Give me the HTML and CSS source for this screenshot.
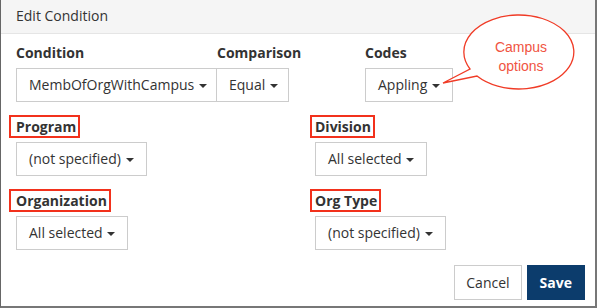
FILE: index.html
```html
<!DOCTYPE html>
<html lang="en">
<head>
    <meta charset="UTF-8">
    <meta name="viewport" content="width=device-width, initial-scale=1.0">
    <title>Edit Condition</title>
    <link rel="stylesheet" href="styles.css">
</head>
<body>
    <div class="dialog">
        <div class="dialog-header">Edit Condition</div>

        <div class="dialog-body">
            <div class="row-top">
                <div class="field field-condition">
                    <label>Condition</label>
                    <button class="dropdown dropdown-joined">MembOfOrgWithCampus <span class="caret"></span></button>
                </div>
                <div class="field field-comparison">
                    <label>Comparison</label>
                    <button class="dropdown dropdown-joined-right">Equal <span class="caret"></span></button>
                </div>
                <div class="field">
                    <label>Codes</label>
                    <button class="dropdown">Appling <span class="caret"></span></button>
                </div>
            </div>

            <div class="row-grid">
                <div class="field">
                    <label><span class="marked">Program</span></label>
                    <button class="dropdown">(not specified) <span class="caret"></span></button>
                </div>
                <div class="field">
                    <label><span class="marked marked-right">Division</span></label>
                    <button class="dropdown">All selected <span class="caret"></span></button>
                </div>
                <div class="field">
                    <label><span class="marked">Organization</span></label>
                    <button class="dropdown">All selected <span class="caret"></span></button>
                </div>
                <div class="field">
                    <label><span class="marked marked-right">Org Type</span></label>
                    <button class="dropdown">(not specified) <span class="caret"></span></button>
                </div>
            </div>
        </div>

        <div class="dialog-footer">
            <button class="btn btn-cancel">Cancel</button>
            <button class="btn btn-save">Save</button>
        </div>

        <!-- annotation bubble over the Codes dropdown -->
        <div class="callout">
            <svg width="140" height="80" viewBox="440 14 140 80">
                <path d="M470 69 A55 37 0 1 1 477 76 L443 83 Z" fill="#fff" stroke="#f03b26" stroke-width="1.3" stroke-linejoin="miter"/>
            </svg>
            <div class="callout-text">Campus<br>options</div>
        </div>
    </div>
</body>
</html>
```

FILE: styles.css
```css
* {
    box-sizing: border-box;
}

body {
    margin: 0;
    font-family: 'Open Sans', 'Noto Sans', sans-serif;
    font-size: 14px;
    line-height: 20px;
    color: #333;
    background-color: #fff;
}

.dialog {
    position: relative;
    width: 597px;
    height: 308px;
    border-left: 1px solid #666;
    border-right: 2px solid #777;
    border-bottom: 2px solid #777;
}

.dialog-header {
    height: 34px;
    padding: 6px 15px 0;
    background-color: #f5f5f5;
    border-bottom: 1px solid #e5e5e5;
}

.dialog-body {
    padding: 9px 15px 0;
}

.row-top {
    display: flex;
}

.field label {
    display: block;
    font-weight: 700;
    margin-bottom: 5px;
}

.field-comparison {
    width: 148px;
}

.dropdown {
    height: 34px;
    padding: 6px 12px;
    font-family: inherit;
    font-size: 14px;
    line-height: 20px;
    color: #333;
    background-color: #fff;
    border: 1px solid #ccc;
    border-radius: 0;
    white-space: nowrap;
}

.dropdown-joined {
    width: 201px;
}

.dropdown-joined-right {
    margin-left: -1px;
    width: 73px;
}

.caret {
    display: inline-block;
    width: 0;
    height: 0;
    margin-left: 1px;
    vertical-align: middle;
    border-top: 4px solid #333;
    border-left: 4px solid transparent;
    border-right: 4px solid transparent;
}

.row-grid {
    display: grid;
    grid-template-columns: 299px 1fr;
    row-gap: 15px;
    margin-top: 15px;
}

.marked {
    border: 2px solid #f2311c;
    padding: 0 2px 0 5px;
    margin-left: -7px;
}

.marked-right {
    padding-left: 3px;
    margin-left: -5px;
}

.dialog-footer {
    display: flex;
    justify-content: flex-end;
    gap: 5px;
    margin-top: 15px;
    padding-right: 10px;
}

.btn {
    height: 35px;
    padding: 6px 11px;
    font-family: inherit;
    font-size: 14px;
    line-height: 20px;
    border: 1px solid #ccc;
    border-radius: 0;
}

.btn-cancel {
    color: #333;
    background-color: #fff;
}

.btn-save {
    padding: 6px 12px;
    font-weight: 700;
    color: #fff;
    background-color: #0c3c6c;
    border-color: #0c3c6c;
}

.callout {
    position: absolute;
    left: 439px;
    top: 14px;
    width: 140px;
    height: 80px;
}

.callout svg {
    display: block;
}

.callout-text {
    position: absolute;
    left: 46px;
    top: 24px;
    width: 70px;
    text-align: center;
    font-family: 'Liberation Sans', Arial, sans-serif;
    font-size: 14px;
    line-height: 19px;
    color: #f05442;
}
```
